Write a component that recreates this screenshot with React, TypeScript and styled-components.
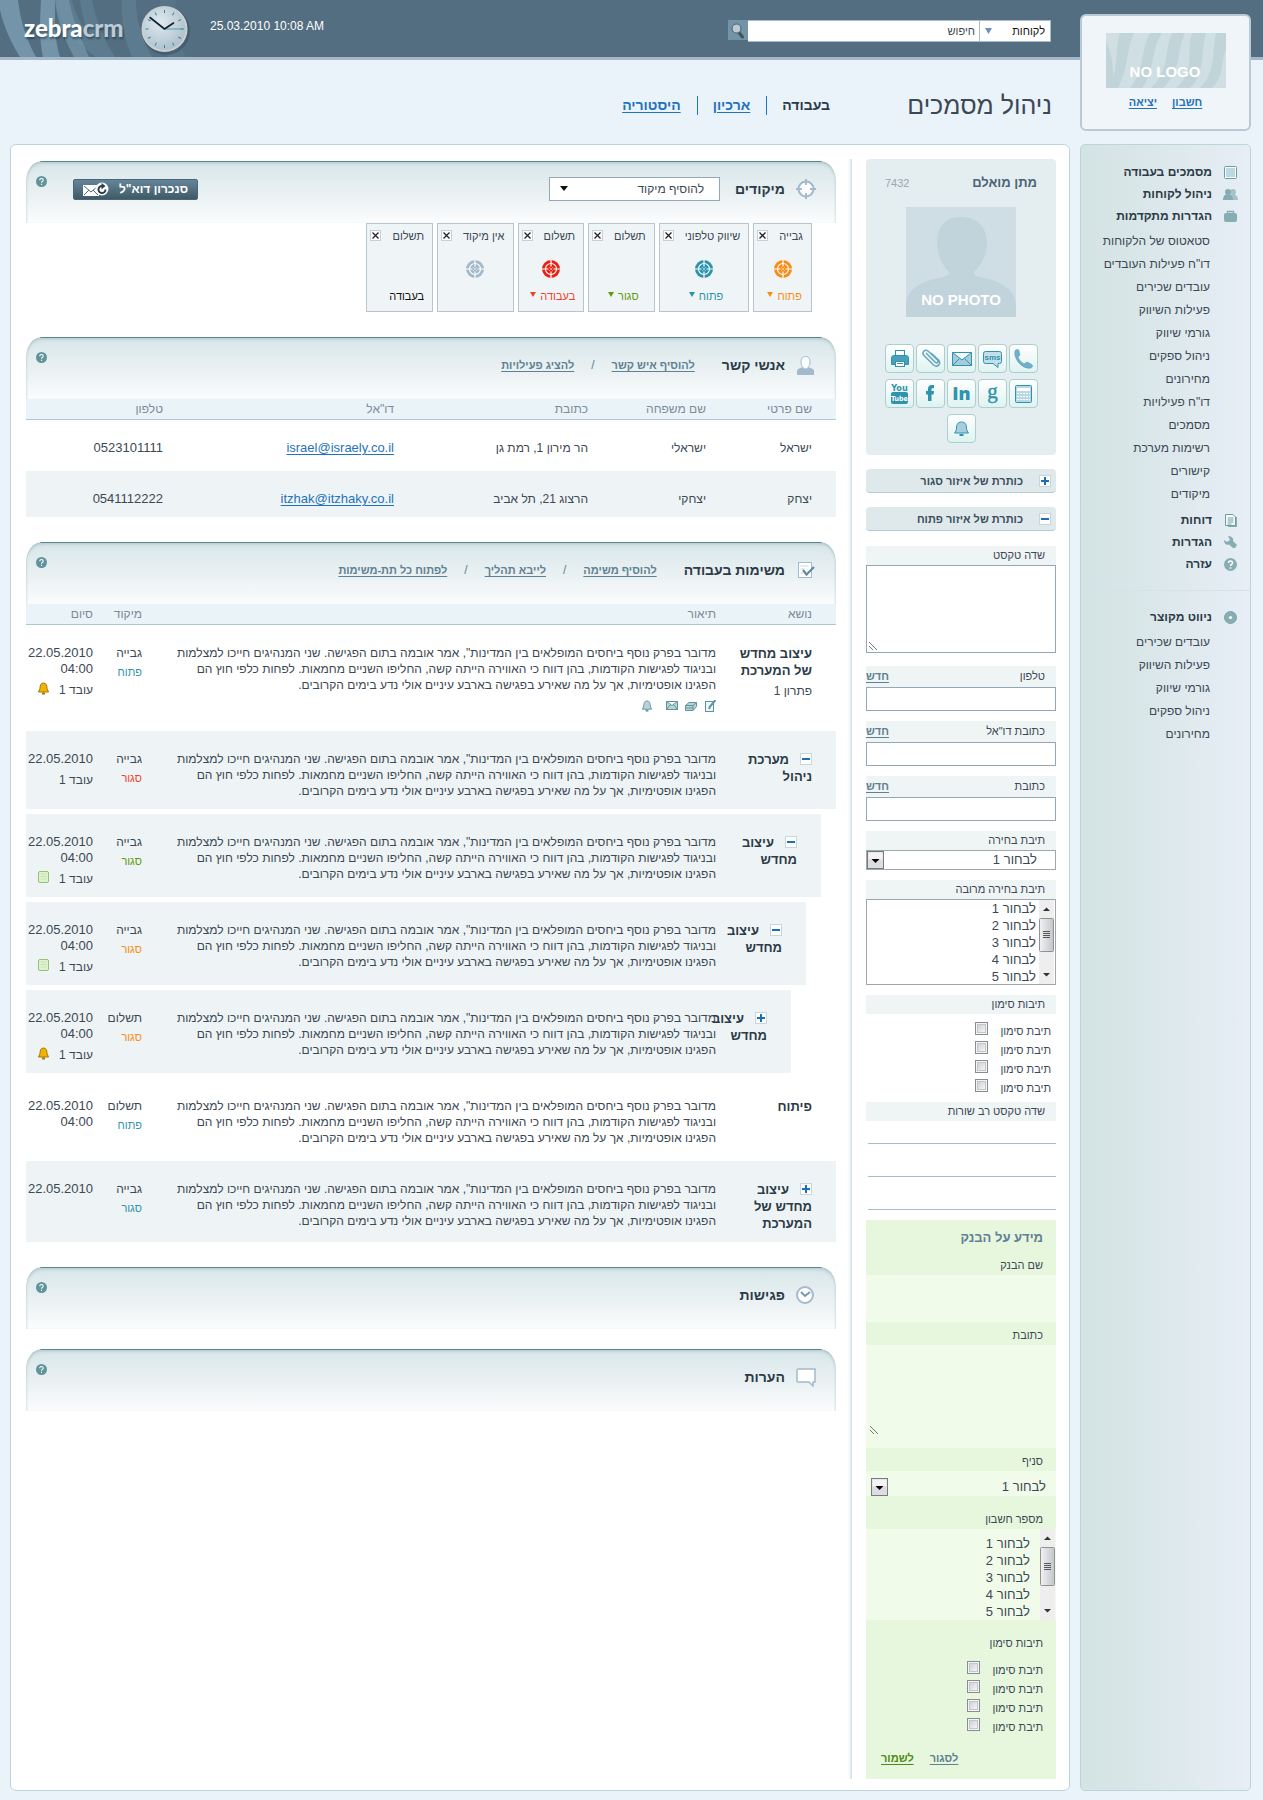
import React, { useState } from 'react';
import styled, { createGlobalStyle, css } from 'styled-components';

const color = {
  ink: '#3c4854',
  strong: '#2c3b47',
  muted: '#7c8b99',
  link: '#1f72bb',
  soft: '#5f8192',
  line: '#bcd5da',
  field: '#93a7b5',
  row: '#eef4f5',
  icon: '#a3b9cc',
  teal: '#2f93ad',
  green: '#5f9a0c',
  red: '#f5402c',
  orange: '#fb8b14',
};

const GlobalStyle = createGlobalStyle`
  * { box-sizing: border-box; }
  body {
    margin: 0;
    background: #ebf3fa;
    color: ${color.ink};
    font-family: "Liberation Sans", Arial, sans-serif;
    font-size: 12px;
    line-height: 16px;
  }
  button, input, select, textarea { font: inherit; color: inherit; margin: 0; border-radius: 0; }
  svg { display: block; flex: none; }
`;

/* ---------- header ---------- */

const Header = styled.header`
  position: relative;
  display: flex;
  direction: ltr;
  height: 60px;
  padding: 0 212px 0 24px;
  background: #536e80;
  border-bottom: 3px solid #a5b8c9;
`;

const Stripes = styled.svg`
  position: absolute;
  left: 0;
  top: 0;
`;

const Brand = styled.a`
  position: relative;
  width: 117px;
  margin-top: 12px;
  color: #fff;
  font: 900 24px/32px Lato, sans-serif;
  text-decoration: none;
  text-shadow: 1px 2px 2px rgba(20, 40, 55, 0.5);
  span { color: #bccbd6; }
`;

const ClockFace = styled.svg`
  position: relative;
  margin-top: 3px;
`;

const DateText = styled.time`
  position: relative;
  margin: 18px auto 0 15px;
  color: #fff;
`;

const Search = styled.form`
  display: flex;
  direction: rtl;
  width: 323px;
  height: 22px;
  margin-top: 20px;
`;

const ScopeBox = styled.div`
  position: relative;
  width: 72px;
  svg { position: absolute; left: 6px; top: 8px; pointer-events: none; }
`;

const ScopeSelect = styled.select`
  appearance: none;
  width: 100%;
  height: 22px;
  padding: 0 5px 1px 0;
  border: 1px solid #a9bcd0;
  background: #fff;
  color: #111;
  font-size: 11px;
`;

const SearchInput = styled.input`
  flex: 1;
  min-width: 0;
  height: 22px;
  padding: 0 4px 1px;
  border: 1px solid #a9bcd0;
  border-inline: 0;
  background: #fff;
  font-size: 11px;
  &::placeholder { color: ${color.ink}; opacity: 1; }
`;

const SearchButton = styled.button`
  width: 20px;
  height: 20px;
  padding: 1px 2px;
  border: 0;
  background: #7294a6;
`;

/* ---------- page frame ---------- */

const Page = styled.div`
  display: flex;
  gap: 10px;
  padding: 0 12px 9px 10px;
`;

const Sidebar = styled.div`
  position: relative;
  display: flex;
  flex: none;
  flex-direction: column;
  gap: 13px;
  width: 171px;
  margin-top: -46px;
`;

const LogoCard = styled.div`
  display: flex;
  flex-direction: column;
  align-items: center;
  height: 117px;
  padding-top: 17px;
  border: 2px solid #b9c9d5;
  border-radius: 6px;
  background: #f0f5fa;
`;

const AccountLinks = styled.div`
  display: flex;
  gap: 15px;
  margin-top: 6px;
`;

const TextLink = styled.a<{ $tone?: string }>`
  color: ${(p) => p.$tone || color.soft};
  font-size: 11px;
  font-weight: bold;
  text-decoration: underline;
  text-underline-offset: 2px;
`;

const Nav = styled.nav`
  flex: 1;
  padding-top: 16px;
  border: 1px solid ${color.line};
  border-radius: 5px;
  background: linear-gradient(to right, #d4e3e3, #dce8eb 50%, #e7eef6);
`;

const NavGroup = styled.ul<{ $divided?: boolean }>`
  margin: 0;
  padding: 0 12px 0 0;
  list-style: none;
  ${(p) => p.$divided && css`
    margin-top: 15px;
    padding-top: 15px;
    border-top: 1px solid #d5e2ea;
  `}
`;

const NavTop = styled.li`
  a {
    display: flex;
    align-items: center;
    gap: 11px;
    height: 22px;
    color: ${color.strong};
    font-weight: bold;
    text-decoration: none;
  }
`;

const NavSubList = styled.ul`
  margin: 0;
  padding: 3px 28px 3px 0;
  list-style: none;
  a {
    display: block;
    color: ${color.ink};
    line-height: 23px;
    text-decoration: none;
    white-space: nowrap;
  }
`;

const MainColumn = styled.main`
  display: flex;
  flex: 1;
  flex-direction: column;
  min-width: 0;
`;

const TitleBar = styled.div`
  display: flex;
  align-items: center;
  height: 84px;
  padding: 6px 18px 0 0;
`;

const PageTitle = styled.h1`
  flex: 0 0 222px;
  margin: 0;
  font-size: 25px;
  font-weight: normal;
  line-height: 32px;
`;

const Tabs = styled.nav`
  display: flex;
  color: ${color.strong};
  font-size: 14px;
  font-weight: bold;
  line-height: 19px;
`;

const TabItem = styled.span`
  margin-right: 15px;
  padding-right: 16px;
  border-right: 1px solid ${color.link};
  a { color: ${color.link}; text-underline-offset: 2px; }
`;

const Panel = styled.div`
  display: flex;
  flex: 1;
  padding: 14px 13px 11px 15px;
  border: 1px solid ${color.line};
  border-radius: 6px;
  background: #fff;
`;

const Divider = styled.div`
  flex: none;
  width: 4px;
  margin: 0 14px 0 12px;
  background: linear-gradient(to right, #fff, #eaf2f3 60%, #c9dcdf);
`;

/* ---------- record column ---------- */

const RecordColumn = styled.aside`
  flex: none;
  width: 190px;
`;

const Profile = styled.section`
  padding: 16px 19px 12px;
  border-radius: 4px;
  background: #e4edef;
  > svg { margin: 0 auto; }
`;

const ProfileHead = styled.div`
  display: flex;
  justify-content: space-between;
  margin-bottom: 16px;
  span { color: #9aa7b0; font-size: 11px; }
`;

const ProfileName = styled.h2`
  margin: 0;
  color: #4b6478;
  font-size: 13px;
  line-height: 16px;
`;

const Actions = styled.div`
  display: flex;
  flex-wrap: wrap;
  justify-content: center;
  gap: 6px 2px;
  margin: 27px -1px 0;
`;

const ActionButton = styled.button`
  display: flex;
  align-items: center;
  justify-content: center;
  width: 29px;
  height: 29px;
  padding: 0;
  border: 1px solid #abd0cf;
  border-radius: 4px;
  background: linear-gradient(#fff, #dff3f0);
`;

const FoldBar = styled.button`
  display: flex;
  align-items: center;
  gap: 16px;
  width: 100%;
  height: 24px;
  margin-top: 14px;
  padding: 0 5px;
  border: 0;
  border-bottom: 1px solid #b1cfd3;
  border-radius: 4px;
  background: #dfe9eb;
  color: #3b4d5c;
  font-size: 11px;
  font-weight: bold;
`;

const Form = styled.form`
  margin-top: 15px;
  font-size: 11px;
`;

const Field = styled.div<{ $gap?: number }>`
  margin-bottom: ${(p) => p.$gap ?? 10}px;
`;

const FieldHead = styled.div<{ $tall?: boolean }>`
  display: flex;
  align-items: center;
  justify-content: space-between;
  height: ${(p) => (p.$tall ? 21 : 19)}px;
  padding: 0 11px 2px 0;
  background: #eff4f5;
`;

const boxed = css`
  display: block;
  width: 100%;
  border: 1px solid ${color.field};
  background: #fff;
  outline: 0;
`;

const TextBox = styled.input`
  ${boxed}
  height: 24px;
  padding: 0 6px;
`;

const AreaFrame = styled.div`
  position: relative;
  > svg { position: absolute; left: 3px; bottom: 3px; pointer-events: none; }
`;

const TextArea = styled.textarea`
  ${boxed}
  height: 88px;
  resize: none;
`;

const LinedArea = styled.textarea`
  display: block;
  width: calc(100% - 2px);
  height: 89px;
  padding: 0;
  border: 0;
  outline: 0;
  resize: none;
  line-height: 33px;
  background: linear-gradient(transparent 22px, #a3c1c8 22px 23px, transparent 23px) 0 0 / 100% 33px;
`;

const SelectFrame = styled.div<{ $plain?: boolean }>`
  position: relative;
  select {
    ${boxed}
    appearance: none;
    height: ${(p) => (p.$plain ? 25 : 20)}px;
    padding: ${(p) => (p.$plain ? '7px 10px 0 0' : '0 18px 0 0')};
    border: ${(p) => (p.$plain ? '0' : '1px solid #a0a6ab')};
    background: ${(p) => (p.$plain ? '#f1fbea' : '#fff')};
    font-size: 13px;
  }
  svg { position: absolute; bottom: ${(p) => (p.$plain ? 0 : 1)}px; left: ${(p) => (p.$plain ? 5 : 1)}px; pointer-events: none; }
`;

const ListFrame = styled.div<{ $plain?: boolean }>`
  display: flex;
  height: ${(p) => (p.$plain ? 91 : 86)}px;
  overflow: hidden;
  border: ${(p) => (p.$plain ? '0' : '1px solid #a0a6ab')};
  padding-right: 1px;
  background: ${(p) => (p.$plain ? '#f1fbea' : '#fff')};
  select {
    flex: 1;
    min-width: 0;
    padding: ${(p) => (p.$plain ? '7px 8px 0 0' : '1px 1px 0 0')};
    border: 0;
    outline: 0;
    background: transparent;
    font-size: 13px;
    overflow: hidden;
    scrollbar-width: none;
  }
  option { min-height: 17px; height: 17px; padding: 0 2px; line-height: 17px; }
`;

const CheckList = styled.div<{ $inset?: boolean }>`
  padding: 8px ${(p) => (p.$inset ? 13 : 5)}px 0 0;
  label { display: flex; gap: 12px; height: 19px; line-height: 19px; }
`;

const CheckBox = styled.input`
  appearance: none;
  width: 13px;
  height: 13px;
  border: 1px solid #8a8d90;
  background: linear-gradient(135deg, #c4c7cf, #fff) padding-box;
  box-shadow: inset 0 0 0 1px #f4f4f4, inset 0 0 0 2px #c3c6cb;
  &:checked { background: ${color.soft}; }
`;

const BankForm = styled.form`
  padding: 10px 0 13px;
  background: #e7f7dd;
  font-size: 11px;
`;

const BankTitle = styled.h2`
  margin: 0 13px 6px 0;
  color: #5f8095;
  font-size: 13px;
  line-height: 16px;
`;

const BankLabel = styled.label<{ $spaced?: boolean }>`
  display: block;
  padding: ${(p) => (p.$spaced ? 15 : 5)}px 13px 2px 0;
`;

const BankInput = styled.input`
  display: block;
  width: 100%;
  height: 47px;
  padding: 0 13px;
  border: 0;
  background: #f1fbea;
`;

const BankArea = styled.textarea`
  display: block;
  width: 100%;
  height: 103px;
  padding: 4px 13px;
  border: 0;
  resize: none;
  background: #f1fbea;
`;

const BankFrame = styled(AreaFrame)`
  > svg { bottom: 14px; left: 4px; }
`;

const BankLinks = styled.div`
  display: flex;
  justify-content: flex-end;
  gap: 16px;
  margin: 13px 0 0 15px;
`;

/* ---------- work area ---------- */

const WorkColumn = styled.div`
  display: flex;
  flex: 1;
  flex-direction: column;
  gap: 20px;
  min-width: 0;
  padding-top: 2px;
`;

const SectionHead = styled.div`
  display: flex;
  align-items: center;
  height: 62px;
  padding: 0 20px 6px 10px;
  border-radius: 16px 16px 0 0 / 20px 20px 0 0;
  background:
    linear-gradient(#5f8f95, #5f8f95) top center / calc(100% - 28px) 1px no-repeat,
    linear-gradient(#d8e7ea, #e9f0f2 50%, #fbfcfd);
  box-shadow:
    inset 0 4px 4px -3px rgba(90, 125, 135, 0.5),
    inset 2px 0 2px -1px rgba(90, 125, 135, 0.15),
    inset -2px 0 2px -1px rgba(90, 125, 135, 0.15);
`;

const SectionTitle = styled.h2`
  margin: 0 11px 0 0;
  color: ${color.strong};
  font-size: 14px;
  line-height: 20px;
`;

const SectionLinks = styled.div`
  display: flex;
  gap: 17px;
  margin-right: 27px;
  color: ${color.soft};
`;

const Spacer = styled.div`
  flex: 1;
`;

const HelpButton = styled.button`
  align-self: flex-start;
  width: 11px;
  height: 11px;
  margin-top: 15px;
  padding: 0;
  border: 0;
  background: none;
`;

const FocusPicker = styled.div`
  position: relative;
  flex: 0 0 171px;
  margin-right: 15px;
  select {
    ${boxed}
    appearance: none;
    height: 24px;
    padding: 0 15px;
    font-size: 12px;
  }
  svg { position: absolute; left: 11px; top: 9px; pointer-events: none; }
`;

const SyncButton = styled.button`
  display: flex;
  align-items: center;
  gap: 10px;
  height: 21px;
  margin: 0 0 0 26px;
  padding: 0 9px;
  border: 1px solid #4d6675;
  border-radius: 2px;
  background: linear-gradient(#64859a, #3f5a66);
  color: #fff;
  font-weight: bold;
`;

const Cards = styled.div`
  display: flex;
  gap: 4px;
  padding: 0 24px 5px 0;
`;

const FocusCard = styled.article`
  display: flex;
  flex-direction: column;
  align-items: center;
  height: 89px;
  padding: 4px 0 7px;
  border: 1px solid #b7c5cf;
  background: #eff4f6;
  > svg { margin-top: 16px; }
`;

const CardHead = styled.div`
  display: flex;
  gap: 11px;
  padding: 0 8px 0 3px;
  font-size: 11px;
  button {
    width: 11px;
    height: 11px;
    margin-top: 2px;
    padding: 0;
    border: 1px solid #c6d0d8;
    background: #fff;
  }
`;

const CardStatus = styled.div<{ $tone: string }>`
  display: flex;
  gap: 4px;
  margin-top: auto;
  padding-left: 4px;
  color: ${(p) => p.$tone};
  font-size: 11px;
  svg { margin-top: 4px; }
`;

const Table = styled.table`
  width: 100%;
  table-layout: fixed;
  border-spacing: 0;
  th {
    height: 21px;
    padding: 0;
    border-bottom: 1px solid #a9c9d6;
    background: #eaf3f8;
    color: ${color.muted};
    font-weight: normal;
    text-align: right;
  }
  th:first-child { padding-right: 24px; }
  td { vertical-align: top; background-clip: padding-box; border-bottom: 5px solid transparent; }
`;

const Col = styled.col<{ $w?: number }>`
  width: ${(p) => (p.$w ? `${p.$w}px` : 'auto')};
`;

const ContactRow = styled.tr<{ $shaded?: boolean }>`
  td {
    height: 51px;
    padding: 20px 0 10px;
    background-color: ${(p) => (p.$shaded ? color.row : 'transparent')};
  }
  td:first-child { padding-right: 24px; }
  td:last-child, a { font-size: 13px; }
  a { color: ${color.link}; text-underline-offset: 2px; }
`;

const TaskRow = styled.tr<{ $shaded?: boolean; $level: number }>`
  td {
    padding: 20px 0 10px;
    background-color: ${(p) => (p.$shaded ? color.row : 'transparent')};
  }
  td:first-child {
    padding-right: 24px;
    border-right: ${(p) => p.$level * 15}px solid transparent;
  }
  td:nth-child(2) { padding-left: 26px; }
`;

const TaskTitle = styled.div`
  color: ${color.strong};
  font-size: 13px;
  font-weight: bold;
  line-height: 17px;
  white-space: nowrap;
  button {
    display: inline-block;
    width: 12px;
    height: 12px;
    margin-left: 11px;
    padding: 0;
    border: 0;
    background: none;
    vertical-align: -1px;
  }
`;

const TaskNote = styled.div`
  margin-top: 4px;
`;

const TaskTools = styled.div`
  display: flex;
  gap: 7px;
  margin-top: 7px;
  padding-bottom: 4px;
  svg:last-child { margin-right: 6px; }
`;

const TaskStatus = styled.div<{ $tone: string }>`
  margin-top: 3px;
  color: ${(p) => p.$tone};
  font-size: 11px;
`;

const TaskDate = styled.div`
  font-size: 13px;
`;

const Worker = styled.div`
  display: flex;
  gap: 9px;
  margin-top: 5px;
`;

/* ---------- drawings ---------- */

const HeaderStripes = () => (
  <Stripes width="200" height="57" viewBox="0 0 200 57" aria-hidden="true">
    <g fill="#5c7b8e">
      <path d="M80 0h12c4 20 12 40 23 57h-16c-10-17-16-36-19-57z" />
      <path d="M122 0h14c0 20 6 40 16 57h-20c-8-18-11-37-10-57z" />
      <path d="M160 0h16c-2 20 2 40 10 57h-18c-8-18-10-37-8-57z" opacity=".5" />
      <path d="M56 0h16c4 20 18 40 38 57h-14c-22-15-36-34-40-57z" />
    </g>
    <g fill="#7495a9">
      <path d="M0 10c4 18 12 34 20 47h16c-10-18-16-38-18-57H0z" />
      <path d="M41 0h14c0 20-1 38 5 57H43c-4-18-3-38-2-57z" />
      <path d="M55 0h14c4 20 10 34 20 57H74C64 38 57 20 55 0z" opacity=".75" />
    </g>
  </Stripes>
);

const Clock = () => (
  <ClockFace width="54" height="54" viewBox="0 0 54 54" aria-hidden="true">
    <defs>
      <radialGradient id="face" cx=".4" cy=".35" r=".8">
        <stop offset="0" stopColor="#dfe9ef" />
        <stop offset="1" stopColor="#a3b7c5" />
      </radialGradient>
    </defs>
    <circle cx="25" cy="28" r="24" fill="#33495a" opacity=".45" />
    <circle cx="23.5" cy="26" r="22" fill="url(#face)" stroke="#c9cfd3" strokeWidth="2" />
    {Array.from({ length: 12 }, (_, i) => (
      <path key={i} d="M23.5 7v3" stroke="#2f8a92" transform={`rotate(${i * 30} 23.5 26)`} />
    ))}
    <path d="M23.5 26H43" stroke="#4ba3a3" />
    <path d="M23.5 26L9 14.5M23.5 26l9-6" stroke="#12222c" strokeWidth="1.6" strokeLinecap="round" />
  </ClockFace>
);

const Triangle = ({ tone, w = 7, h = 6 }: { tone: string; w?: number; h?: number }) => (
  <svg width={w} height={h} viewBox="0 0 7 6" preserveAspectRatio="none" aria-hidden="true">
    <path d="M0 0h7L3.5 6z" fill={tone} />
  </svg>
);

const Magnifier = () => (
  <svg width="16" height="17" viewBox="0 0 16 17" aria-hidden="true">
    <path d="M8.5 10l4 5" stroke="#43535e" strokeWidth="3" strokeLinecap="round" />
    <circle cx="6.5" cy="6.5" r="4.5" fill="#bccad3" stroke="#4f6b7b" strokeWidth="1.2" />
  </svg>
);

const NoLogo = () => (
  <svg width="120" height="55" viewBox="0 0 120 55" role="img" aria-label="NO LOGO">
    <rect width="120" height="55" fill="#cfdfe4" />
    <g fill="#c1d4da">
      <path d="M0 8c5 10 8 22 7 47H0zM14 0h14c-8 18-6 36-16 55H2C14 36 8 18 14 0z" />
      <path d="M44 0h12c-12 18-6 36-20 55H24C40 36 34 18 44 0zM66 0h13c-8 18-4 38-22 55H45C64 38 58 18 66 0z" />
      <path d="M86 0h14c-6 20 0 40-16 55H70C90 38 80 18 86 0zM110 0h10v16c-5 12-2 28-14 39H94c16-16 12-36 16-55z" />
    </g>
    <text x="59" y="44" textAnchor="middle" fill="#fff" fontSize="15" fontWeight="bold">NO LOGO</text>
  </svg>
);

const NoPhoto = () => (
  <svg width="110" height="110" viewBox="0 0 110 110" role="img" aria-label="NO PHOTO">
    <rect width="110" height="110" fill="#cfdee4" />
    <path d="M55 10c16 0 26 10 26 26 0 13-7 23-13 29-1 3 4 5 10 6 18 4 32 12 32 28v11H0V99c0-16 14-24 32-28 6-1 12-3 11-6-6-6-12-16-12-29 0-16 8-26 24-26z" fill="#c1d3db" />
    <text x="55" y="98" textAnchor="middle" fill="#fff" fontSize="15" fontWeight="bold">NO PHOTO</text>
  </svg>
);

const NavIcon = ({ kind }: { kind: string }) => (
  <svg width="15" height="13" viewBox="0 0 15 13" fill="#86adb3" aria-hidden="true">
    {kind === 'docs' && <><rect x="1.5" y=".5" width="12" height="12" rx="1" fill="#fff" stroke="#6a9da3" /><path d="M3 2h9v9H3z" fill="#bcd9df" /></>}
    {kind === 'people' && <><g opacity=".65"><circle cx="10" cy="4" r="3" /><path d="M6 12c0-4 2-6 4-6s5 2 5 6z" /></g><circle cx="5" cy="4" r="3" /><path d="M0 12c0-4 2-6 5-6s5 2 5 6z" /></>}
    {kind === 'bag' && <><path d="M4.5 4V1.5h6V4" fill="none" stroke="#86adb3" strokeWidth="1.3" /><rect x="1" y="3" width="13" height="9" rx="2" /></>}
    {kind === 'report' && <><path d="M5 3h9v10H5z" /><path d="M2.5.5H10L12.500 3v8.500h-10z" fill="#fff" stroke="#6a9da3" /><path d="M4.500 4h6M4.500 6h6M4.500 8h6M4.500 10h4" stroke="#6a9da3" /></>}
    {kind === 'wrench' && <path d="M5 0c4 0 6 3 5 5l4 4-2 3h-2L6 8.500C3 9.500 1 7.500 1 4l3 2 3-2z" />}
    {kind === 'help' && <><circle cx="7.5" cy="6.5" r="6.5" /><path d="M5.500 5a2 2 0 114 0c0 1.300-2 1.300-2 3M7.500 9.300v1.500" fill="none" stroke="#fff" strokeWidth="1.500" /></>}
    {kind === 'compass' && <><circle cx="7.5" cy="6.5" r="6" stroke="#77a4ab" /><circle cx="7.5" cy="6.5" r="1.600" fill="#fff" /></>}
  </svg>
);

const Toggle = ({ open }: { open?: boolean }) => (
  <svg width="12" height="12" viewBox="0 0 12 12" aria-hidden="true">
    <rect x=".5" y=".5" width="11" height="11" fill="#fff" stroke="#c7d5df" />
    <path d={open ? 'M2 6h8' : 'M2 6h8M6 2v8'} stroke="#1a6fb8" strokeWidth="2" />
  </svg>
);

const HelpIcon = () => (
  <svg width="11" height="11" viewBox="0 0 11 11" aria-hidden="true">
    <circle cx="5.5" cy="5.5" r="5.5" fill="#5f949b" />
    <path d="M3.800 4.200a1.700 1.700 0 113.400 0c0 1.200-1.700 1.200-1.700 2.500M5.500 7.800v1.200" fill="none" stroke="#fff" strokeWidth="1.100" />
  </svg>
);

const SyncIcon = () => (
  <svg width="26" height="15" viewBox="0 0 26 15" aria-hidden="true">
    <rect y="3" width="16" height="11" fill="#fff" />
    <path d="M1 4l7 6 7-6M1 13l5-5M15 13l-5-5" fill="none" stroke="#506b79" />
    <circle cx="19" cy="7" r="6.5" fill="#fff" />
    <path d="M22.500 7.500A3.500 3.500 0 1119 4" fill="none" stroke="#2b3f4b" strokeWidth="2" />
    <path d="M18.500 1l4 3-4 3.500z" fill="#2b3f4b" />
  </svg>
);

const Target = ({ tone }: { tone: string }) => (
  <svg width="18" height="18" viewBox="0 0 18 18" aria-hidden="true">
    <circle cx="9" cy="9" r="9" fill={tone} />
    <circle cx="9" cy="9" r="5.5" fill="none" stroke="#fff" strokeWidth="1.200" />
    <path d="M9 0v6.500M9 11.500V18M0 9h6.500M11.500 9H18" stroke="#fff" strokeWidth="1.200" />
    <path d="M7 7l4 4M11 7l-4 4" stroke="#fff" strokeWidth=".7" opacity=".7" />
  </svg>
);

const SectionIcon = ({ kind }: { kind: string }) => (
  <svg width="20" height="20" viewBox="0 0 20 20" fill="none" stroke={color.icon} aria-hidden="true">
    {kind === 'focus' && <><circle cx="10" cy="10" r="7.5" fill="#fff" strokeWidth="2" /><path d="M10 0v6M10 14v6M0 10h6M14 10h6" strokeWidth="2" /></>}
    {kind === 'contact' && <><path d="M1 20v-4c0-2 3-3 6-4h5c3 1 6 2 6 4v4z" fill={color.icon} stroke="none" /><path d="M9.500 1.500c3 0 4.500 2 4.500 5 0 4-2 7.500-4.500 7.500S5 10.500 5 6.500c0-3 1.500-5 4.500-5z" fill="#fff" /></>}
    {kind === 'task' && <><rect x="2.5" y="2.5" width="13" height="15" fill="#fff" /><path d="M4.500 6h8M4.500 9h4M4.500 13h3" stroke="#c8d6e2" /><path d="M7 10l3.500 4.500L18 7" stroke="#6488a8" strokeWidth="2.200" /></>}
    {kind === 'clock' && <><circle cx="9" cy="10" r="8" fill="#fff" strokeWidth="2" /><path d="M5 7l4 4 5-4" stroke="#7499b5" strokeWidth="2" /></>}
    {kind === 'note' && <path d="M2 2h17v13h-2v4l-4-4H2c-.6 0-1-.4-1-1V3z" fill="#fff" strokeWidth="1.500" />}
  </svg>
);

const BellIcon = ({ tone = '#f0b400', edge = '#a87700', size = 13 }: { tone?: string; edge?: string; size?: number }) => (
  <svg width={size} height={size} viewBox="0 0 13 13" aria-hidden="true">
    <path d="M6.500 1C3.500 1 3 4 3 6.500L1.500 10h10L10 6.500C10 4 9.500 1 6.500 1z" fill={tone} stroke={edge} />
    <path d="M5 10.500h3v2H5z" fill={edge} />
  </svg>
);

const SheetIcon = () => (
  <svg width="13" height="13" viewBox="0 0 13 13" aria-hidden="true">
    <rect x="1.5" y=".5" width="10" height="11" rx="1.500" fill="#e0f2d0" stroke="#94c077" />
    <path d="M3.500 3h6M3.500 5.500h6M3.500 8h6" stroke="#c5e2ae" />
  </svg>
);

const ToolIcon = ({ kind }: { kind: string }) => (
  <svg width="12" height="12" viewBox="0 0 12 12" fill="#b9d4d7" stroke="#5f949b" aria-hidden="true">
    {kind === 'edit' && <><rect x="1.5" y="1.5" width="8" height="10" fill="#eef6f7" /><path d="M11.500 0L6 6.500 5 9" strokeWidth="2" /></>}
    {kind === 'stack' && <path d="M.5 5.500L4 2.500h7.500v4L8 10.500H.5zM.5 5.500H8v5M8 5.500l3.500-3M.5 8H8" />}
    {kind === 'mail' && <path d="M.5 1.500h11v8H.5zM.5 1.500l5.500 4 5.500-4M.5 9.500l4-5M11.500 9.500l-4-5" />}
  </svg>
);

const ArrowButton = () => (
  <svg width="17" height="18" viewBox="0 0 17 18" aria-hidden="true">
    <rect x=".5" y=".5" width="16" height="17" fill="#dcdde0" stroke="#777c80" />
    <rect x="1.5" y="1.5" width="14" height="7" fill="#f3f3f4" />
    <path d="M4.500 8h8l-4 4z" fill="#000" />
  </svg>
);

const ScrollBar = ({ height, thumb }: { height: number; thumb: number }) => (
  <svg width="15" height={height} viewBox={`0 0 15 ${height}`} aria-hidden="true">
    <defs>
      <linearGradient id="thumb"><stop offset="0" stopColor="#f2f2f3" /><stop offset="1" stopColor="#c4c5ca" /></linearGradient>
    </defs>
    <rect width="15" height={height} fill="#eeeeef" />
    <path d="M4 11h7L7.500 7.500z" fill="#333" />
    <path d={`M4 ${height - 11}h7l-3.500 3.500z`} fill="#333" />
    <rect x=".5" y="18.5" width="14" height={thumb} rx="1" fill="url(#thumb)" stroke="#8f9296" />
    {[0, 2, 4, 6].map((d) => <path key={d} d={`M4 ${Math.floor(thumb / 2) + 15.5 + d}h7`} stroke="#55595d" />)}
  </svg>
);

const Grip = () => (
  <svg width="8" height="8" viewBox="0 0 8 8" aria-hidden="true">
    <path d="M0 0l8 8M0 4l4 4" stroke="#555" strokeWidth=".8" />
  </svg>
);

const ActionIcon = ({ kind }: { kind: string }) => (
  <svg width="25" height="25" viewBox="0 0 25 25" fill="#8cb9cf" stroke={color.teal} aria-hidden="true">
    {kind === 'phone' && <path d="M4 5c1-2 4-2 4 0l1 4-2 2c1 3 3 5 6 7l3-2 4 2c2 1 2 3 0 4C11 24 2 12 4 5z" fill="#6fb0cb" stroke="#5a9dbb" strokeWidth=".6" />}
    {kind === 'sms' && <><path d="M5.500 5.500h14a2 2 0 012 2v8a2 2 0 01-2 2h-1.500v4l-5-4h-7.500a2 2 0 01-2-2v-8a2 2 0 012-2z" fill="#c4dfe9" /><text x="12.5" y="14" textAnchor="middle" fill={color.teal} stroke="none" fontSize="8" fontWeight="bold">sms</text></>}
    {kind === 'mail' && <path d="M3.500 6.500h19v13h-19zM3.500 6.500l9.500 7.500 9.500-7.500M3.500 19.500l7-7M22.500 19.500l-7-7" fill="#a8cbdb" />}
    {kind === 'clip' && <path d="M8 7l9 9c2 2 4 0 2.500-2L10 5C7 3 3 6 6 9.500l9.500 9.500c4 3 8-1 5-5L13 7" fill="none" stroke="#62a5bf" strokeWidth="1.500" />}
    {kind === 'print' && <><rect x="8.5" y="4.5" width="9" height="6" fill="#fff" /><path d="M4.500 11.500c0-1 1-2 2-2h13c1 0 2 1 2 2v7h-17z" fill="#4a9fba" /><rect x="8.5" y="15.5" width="9" height="5" fill="#fff" /><path d="M10 17.500h6" /></>}
    {kind === 'calc' && <><rect x="4.5" y="4.5" width="16" height="17" rx="1" fill="#b9d7e4" /><path d="M6 7h13v3H6z" fill="#fff" stroke="none" /><path d="M6 12.500h13M6 15.500h13M6 18.500h13" stroke="#fff" strokeDasharray="2 1" /></>}
    {kind === 'g' && <text x="12.5" y="17" textAnchor="middle" stroke={color.teal} strokeWidth=".4" fill={color.teal} fontSize="21" fontFamily="Liberation Serif">g</text>}
    {kind === 'in' && <text x="12.5" y="19" textAnchor="middle" stroke="none" fill={color.teal} fontSize="18" fontWeight="800" fontFamily="Open Sans">in</text>}
    {kind === 'f' && <path d="M10 20v-6.500H8V10h2V8c0-3 1.500-4 4-4h2v3.200h-1.300c-1 0-1.200.4-1.200 1.300V10h2.500l-.4 3.500h-2.100V20z" fill={color.teal} stroke="none" />}
    {kind === 'youtube' && <><text x="12.5" y="10" textAnchor="middle" stroke="none" fill={color.teal} fontSize="9" fontWeight="bold" fontFamily="DejaVu Sans Condensed">You</text><rect x="4" y="11" width="17" height="12" rx="2" fill={color.teal} stroke="none" /><text x="12.5" y="20" textAnchor="middle" stroke="none" fill="#fff" fontSize="7" fontWeight="bold" fontFamily="DejaVu Sans Condensed">Tube</text></>}
    {kind === 'bell' && <><path d="M12.500 6c-4 0-5 3-5 6 0 2-1 4-2 5h14c-1-1-2-3-2-5 0-3-1-6-5-6z" fill="#a9cddd" /><path d="M10.500 18h4v2h-4z" fill={color.teal} stroke="none" /></>}
  </svg>
);

/* ---------- data ---------- */

const navMain = [
  { icon: 'docs', text: 'מסמכים בעבודה' },
  { icon: 'people', text: 'ניהול לקוחות' },
  { icon: 'bag', text: 'הגדרות מתקדמות' },
];
const navSub = ['סטאטוס של הלקוחות', 'דו"ח פעילות העובדים', 'עובדים שכירים', 'פעילות השיווק', 'גורמי שיווק', 'ניהול ספקים', 'מחירונים', 'דו"ח פעילויות', 'מסמכים', 'רשימות מערכת', 'קישורים', 'מיקודים'];
const navTail = [
  { icon: 'report', text: 'דוחות' },
  { icon: 'wrench', text: 'הגדרות' },
  { icon: 'help', text: 'עזרה' },
];
const navQuick = ['עובדים שכירים', 'פעילות השיווק', 'גורמי שיווק', 'ניהול ספקים', 'מחירונים'];

const actions = [
  ['phone', 'טלפון'], ['sms', 'הודעה'], ['mail', 'דואר'], ['clip', 'קובץ'], ['print', 'הדפסה'],
  ['calc', 'מחשבון'], ['g', 'Google'], ['in', 'LinkedIn'], ['f', 'Facebook'], ['youtube', 'YouTube'], ['bell', 'תזכורת'],
];

const options = [1, 2, 3, 4, 5, 6, 7, 8].map((n) => `לבחור ${n}`);

const cards = [
  { name: 'גבייה', target: '#fb8b14', status: 'פתוח', tone: '#fb8b14' },
  { name: 'שיווק טלפוני', target: '#2b93aa', status: 'פתוח', tone: '#2b93aa' },
  { name: 'תשלום', status: 'סגור', tone: color.green },
  { name: 'תשלום', target: '#e92314', status: 'בעבודה', tone: color.red },
  { name: 'אין מיקוד', target: '#a3b9cc' },
  { name: 'תשלום', status: 'בעבודה', tone: '#111', locked: true },
];

const contacts = [
  ['ישראל', 'ישראלי', 'הר מירון 1, רמת גן', 'israel@israely.co.il', '0523101111'],
  ['יצחק', 'יצחקי', 'הרצוג 21, תל אביב', 'itzhak@itzhaky.co.il', '0541112222'],
];

const about = 'מדובר בפרק נוסף ביחסים המופלאים בין המדינות", אמר אובמה בתום הפגישה. שני המנהיגים חייכו למצלמות ובניגוד לפגישות הקודמות, בהן דווח כי האווירה הייתה קשה, החליפו השניים מחמאות. לפחות כלפי חוץ הם הפגינו אופטימיות, אך על מה שאירע בפגישה בארבע עיניים אולי נדע בימים הקרובים.';

type Task = {
  title: string[]; note?: string; tools?: boolean; toggle?: 'open' | 'closed'; level?: number; shaded?: boolean;
  focus: string; status: string; tone: string; time?: string; worker?: boolean; mark?: 'bell' | 'sheet';
};

const tasks: Task[] = [
  { title: ['עיצוב מחדש', 'של המערכת'], note: 'פתרון 1', tools: true, focus: 'גבייה', status: 'פתוח', tone: color.teal, time: '04:00', worker: true, mark: 'bell' },
  { title: ['מערכת', 'ניהול'], toggle: 'open', shaded: true, focus: 'גבייה', status: 'סגור', tone: color.red, worker: true },
  { title: ['עיצוב', 'מחדש'], toggle: 'open', level: 1, shaded: true, focus: 'גבייה', status: 'סגור', tone: color.green, time: '04:00', worker: true, mark: 'sheet' },
  { title: ['עיצוב', 'מחדש'], toggle: 'open', level: 2, shaded: true, focus: 'גבייה', status: 'סגור', tone: color.orange, time: '04:00', worker: true, mark: 'sheet' },
  { title: ['עיצוב', 'מחדש'], toggle: 'closed', level: 3, shaded: true, focus: 'תשלום', status: 'סגור', tone: color.orange, time: '04:00', worker: true, mark: 'bell' },
  { title: ['פיתוח'], focus: 'תשלום', status: 'פתוח', tone: color.teal, time: '04:00' },
  { title: ['עיצוב', 'מחדש של', 'המערכת'], toggle: 'closed', shaded: true, focus: 'גבייה', status: 'סגור', tone: color.teal },
];

/* ---------- parts ---------- */

const Section = ({ icon, title, links, extra, tail, children }: {
  icon: string; title: string; links?: string[]; extra?: React.ReactNode; tail?: React.ReactNode; children?: React.ReactNode;
}) => (
  <section>
    <SectionHead>
      <SectionIcon kind={icon} />
      <SectionTitle>{title}</SectionTitle>
      {extra}
      {links && (
        <SectionLinks>
          {links.map((text, i) => (
            <React.Fragment key={text}>
              {i > 0 && <span>/</span>}
              <TextLink href="#">{text}</TextLink>
            </React.Fragment>
          ))}
        </SectionLinks>
      )}
      <Spacer />
      {tail}
      <HelpButton type="button" aria-label="עזרה"><HelpIcon /></HelpButton>
    </SectionHead>
    {children}
  </section>
);

const LabelledInput = ({ id, label }: { id: string; label: string }) => (
  <Field>
    <FieldHead $tall>
      <label htmlFor={id}>{label}</label>
      <TextLink href="#">חדש</TextLink>
    </FieldHead>
    <TextBox id={id} />
  </Field>
);

const Checks = ({ name, inset }: { name: string; inset?: boolean }) => (
  <CheckList $inset={inset}>
    {[1, 2, 3, 4].map((n) => (
      <label key={n}>תיבת סימון<CheckBox type="checkbox" name={`${name}${n}`} /></label>
    ))}
  </CheckList>
);

const Options = () => <>{options.map((o) => <option key={o}>{o}</option>)}</>;

const Record = () => {
  const [open, setOpen] = useState(true);
  return (
    <RecordColumn>
      <Profile>
        <ProfileHead>
          <ProfileName>מתן מואלם</ProfileName>
          <span>7432</span>
        </ProfileHead>
        <NoPhoto />
        <Actions>
          {actions.map(([kind, label]) => (
            <ActionButton key={kind} type="button" aria-label={label}><ActionIcon kind={kind} /></ActionButton>
          ))}
        </Actions>
      </Profile>
      <FoldBar type="button"><Toggle />כותרת של איזור סגור</FoldBar>
      <FoldBar type="button" aria-expanded={open} onClick={() => setOpen(!open)}><Toggle open={open} />כותרת של איזור פתוח</FoldBar>
      {open && (
        <Form>
          <Field $gap={13}>
            <FieldHead><label htmlFor="text">שדה טקסט</label></FieldHead>
            <AreaFrame><TextArea id="text" /><Grip /></AreaFrame>
          </Field>
          <LabelledInput id="phone" label="טלפון" />
          <LabelledInput id="mail" label={'כתובת דו"אל'} />
          <LabelledInput id="address" label="כתובת" />
          <Field>
            <FieldHead><label htmlFor="choice">תיבת בחירה</label></FieldHead>
            <SelectFrame><select id="choice"><Options /></select><ArrowButton /></SelectFrame>
          </Field>
          <Field>
            <FieldHead><label htmlFor="choices">תיבת בחירה מרובה</label></FieldHead>
            <ListFrame><ScrollBar height={84} thumb={33} /><select id="choices" multiple size={5}><Options /></select></ListFrame>
          </Field>
          <Field $gap={4}>
            <FieldHead>תיבות סימון</FieldHead>
            <Checks name="check" />
          </Field>
          <Field>
            <FieldHead><label htmlFor="lines">שדה טקסט רב שורות</label></FieldHead>
            <LinedArea id="lines" />
          </Field>
        </Form>
      )}
      <BankForm>
        <BankTitle>מידע על הבנק</BankTitle>
        <BankLabel htmlFor="bank">שם הבנק</BankLabel>
        <BankInput id="bank" />
        <BankLabel htmlFor="bank-address">כתובת</BankLabel>
        <BankFrame><BankArea id="bank-address" /><Grip /></BankFrame>
        <BankLabel htmlFor="branch">סניף</BankLabel>
        <SelectFrame $plain><select id="branch"><Options /></select><ArrowButton /></SelectFrame>
        <BankLabel htmlFor="account" $spaced>מספר חשבון</BankLabel>
        <ListFrame $plain><ScrollBar height={91} thumb={38} /><select id="account" multiple size={5}><Options /></select></ListFrame>
        <BankLabel as="div" $spaced>תיבות סימון</BankLabel>
        <Checks name="bank-check" inset />
        <BankLinks>
          <TextLink href="#">לסגור</TextLink>
          <TextLink href="#" $tone="#4c8c14">לשמור</TextLink>
        </BankLinks>
      </BankForm>
    </RecordColumn>
  );
};

const FocusCards = () => (
  <Cards>
    {cards.map((card, i) => (
      <FocusCard key={i}>
        <CardHead>
          {card.name}
          <button type="button" aria-label="הסרה">
            <svg width="9" height="9" viewBox="0 0 9 9"><path d="M1.500 1.500l6 6M7.500 1.500l-6 6" stroke="#222" strokeWidth="1.300" /></svg>
          </button>
        </CardHead>
        {card.target && <Target tone={card.target} />}
        {card.status && (
          <CardStatus $tone={card.tone}>
            {card.status}
            <Triangle tone={card.locked ? 'none' : card.tone} w={6} h={5} />
          </CardStatus>
        )}
      </FocusCard>
    ))}
  </Cards>
);

const ContactTable = () => (
  <Table>
    <colgroup><Col $w={130} /><Col $w={118} /><Col $w={194} /><Col /><Col $w={137} /></colgroup>
    <thead><tr><th>שם פרטי</th><th>שם משפחה</th><th>כתובת</th><th>דו"אל</th><th>טלפון</th></tr></thead>
    <tbody>
      {contacts.map(([first, last, address, mail, phone], i) => (
        <ContactRow key={mail} $shaded={i % 2 === 1}>
          <td>{first}</td><td>{last}</td><td>{address}</td><td><a href={`mailto:${mail}`}>{mail}</a></td><td>{phone}</td>
        </ContactRow>
      ))}
    </tbody>
  </Table>
);

const TaskTable = () => (
  <Table>
    <colgroup><Col $w={120} /><Col /><Col $w={49} /><Col $w={67} /></colgroup>
    <thead><tr><th>נושא</th><th>תיאור</th><th>מיקוד</th><th>סיום</th></tr></thead>
    <tbody>
      {tasks.map((task, i) => (
        <TaskRow key={i} $shaded={task.shaded} $level={task.level || 0}>
          <td>
            <TaskTitle>
              {task.toggle && <button type="button" aria-label="תת-משימות"><Toggle open={task.toggle === 'open'} /></button>}
              {task.title.map((line, n) => <React.Fragment key={line}>{n > 0 && <br />}{line}</React.Fragment>)}
            </TaskTitle>
            {task.note && <TaskNote>{task.note}</TaskNote>}
          </td>
          <td>
            {about}
            {task.tools && (
              <TaskTools>
                <ToolIcon kind="edit" /><ToolIcon kind="stack" /><ToolIcon kind="mail" /><BellIcon tone="#b9d4d7" edge="#5f949b" size={12} />
              </TaskTools>
            )}
          </td>
          <td>{task.focus}<TaskStatus $tone={task.tone}>{task.status}</TaskStatus></td>
          <td>
            <TaskDate>22.05.2010</TaskDate>
            {task.time && <TaskDate>{task.time}</TaskDate>}
            {task.worker && (
              <Worker>עובד 1{task.mark === 'bell' && <BellIcon />}{task.mark === 'sheet' && <SheetIcon />}</Worker>
            )}
          </td>
        </TaskRow>
      ))}
    </tbody>
  </Table>
);

const NavLinks = ({ items }: { items: string[] }) => (
  <NavSubList>{items.map((text) => <li key={text}><a href="#">{text}</a></li>)}</NavSubList>
);

export default function App() {
  return (
    <div dir="rtl" lang="he">
      <GlobalStyle />
      <Header>
        <HeaderStripes />
        <Brand href="#">zebra<span>crm</span></Brand>
        <Clock />
        <DateText>25.03.2010 10:08 AM</DateText>
        <Search role="search">
          <ScopeBox>
            <ScopeSelect aria-label="היקף החיפוש"><option>לקוחות</option></ScopeSelect>
            <Triangle tone="#6d8fc0" />
          </ScopeBox>
          <SearchInput aria-label="חיפוש" placeholder="חיפוש" />
          <SearchButton type="submit" aria-label="חיפוש"><Magnifier /></SearchButton>
        </Search>
      </Header>
      <Page>
        <Sidebar>
          <LogoCard>
            <NoLogo />
            <AccountLinks>
              <TextLink href="#" $tone={color.link}>חשבון</TextLink>
              <TextLink href="#" $tone={color.link}>יציאה</TextLink>
            </AccountLinks>
          </LogoCard>
          <Nav>
            <NavGroup>
              {navMain.map((n) => <NavTop key={n.text}><a href="#"><NavIcon kind={n.icon} />{n.text}</a></NavTop>)}
              <li><NavLinks items={navSub} /></li>
              {navTail.map((n) => <NavTop key={n.text}><a href="#"><NavIcon kind={n.icon} />{n.text}</a></NavTop>)}
            </NavGroup>
            <NavGroup $divided>
              <NavTop><a href="#"><NavIcon kind="compass" />ניווט מקוצר</a></NavTop>
              <li><NavLinks items={navQuick} /></li>
            </NavGroup>
          </Nav>
        </Sidebar>
        <MainColumn>
          <TitleBar>
            <PageTitle>ניהול מסמכים</PageTitle>
            <Tabs>
              <span>בעבודה</span>
              <TabItem><a href="#">ארכיון</a></TabItem>
              <TabItem><a href="#">היסטוריה</a></TabItem>
            </Tabs>
          </TitleBar>
          <Panel>
            <Record />
            <Divider />
            <WorkColumn>
              <Section
                icon="focus"
                title="מיקודים"
                extra={<FocusPicker><select aria-label="להוסיף מיקוד"><option>להוסיף מיקוד</option></select><Triangle tone="#111" w={8} h={5} /></FocusPicker>}
                tail={<SyncButton type="button">סנכרון דוא"ל<SyncIcon /></SyncButton>}
              >
                <FocusCards />
              </Section>
              <Section icon="contact" title="אנשי קשר" links={['להוסיף איש קשר', 'להציג פעילויות']}>
                <ContactTable />
              </Section>
              <Section icon="task" title="משימות בעבודה" links={['להוסיף משימה', 'לייבא תהליך', 'לפתוח כל תת-משימות']}>
                <TaskTable />
              </Section>
              <Section icon="clock" title="פגישות" />
              <Section icon="note" title="הערות" />
            </WorkColumn>
          </Panel>
        </MainColumn>
      </Page>
    </div>
  );
}
